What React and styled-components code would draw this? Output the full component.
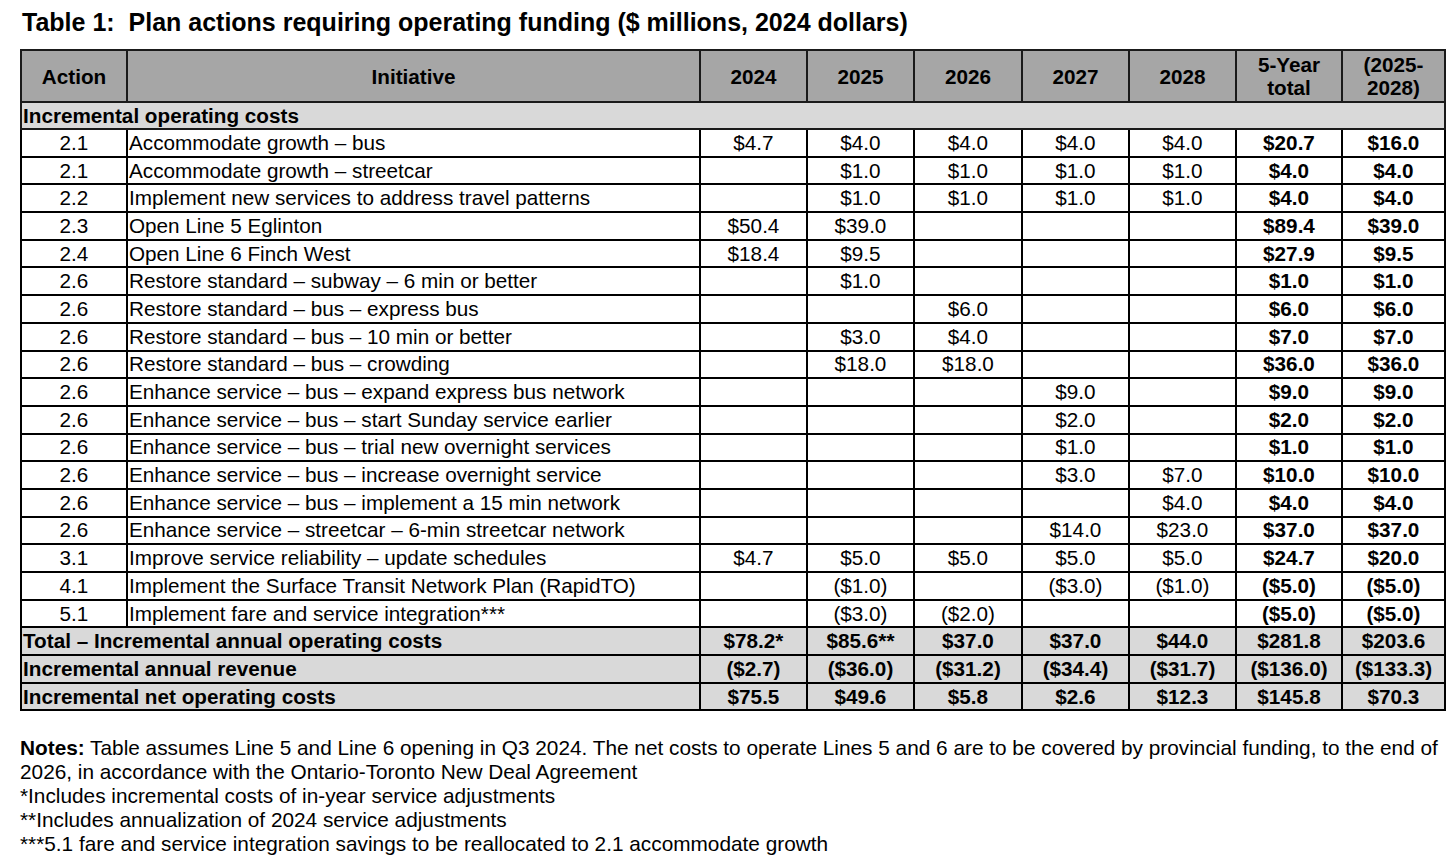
import React from 'react';
import styled, { createGlobalStyle } from 'styled-components';

const GlobalStyle = createGlobalStyle`
  body {
    margin: 0;
    background: #fff;
    color: #000;
    font-family: 'Liberation Sans', Arial, sans-serif;
  }
`;

const StyledPage = styled.div`
  padding: 8px 0 0 20px;
  width: 1424px;
`;

const Title = styled.h1`
  margin: 0 0 13px 2px;
  font-size: 25px;
  line-height: 28px;
  font-weight: 700;
  white-space: pre;
`;

const Table = styled.table`
  width: 1424px;
  table-layout: fixed;
  border-collapse: collapse;
  border: 2px solid #3a3a3a;
  font-size: 20.7px;
`;

const HeadRow = styled.tr`
  height: 52px;
`;

const HeadCell = styled.th`
  padding: 0 2px;
  background: #a6a6a6;
  border: 2px solid #1a1a1a;
  font-weight: 700;
  line-height: 23px;
  text-align: center;
  vertical-align: middle;
`;

const SectionRow = styled.tr`
  height: 27px;
`;

const SectionCell = styled.td`
  padding: 0 1px;
  background: #d9d9d9;
  border: 2px solid #1a1a1a;
  font-weight: 700;
  line-height: 22px;
  text-align: left;
`;

const Row = styled.tr`
  height: 27.7px;
  background: ${({ $shaded }) => ($shaded ? '#d9d9d9' : '#fff')};
`;

const Cell = styled.td`
  padding: 0 1px;
  border: 2px solid #000;
  line-height: 22px;
  text-align: ${({ $align }) => $align || 'center'};
  font-weight: ${({ $bold }) => ($bold ? 700 : 400)};
  white-space: nowrap;
  overflow: hidden;
`;

const Notes = styled.div`
  margin-top: 25px;
  font-size: 20.8px;
  line-height: 24px;

  strong {
    font-weight: 700;
  }
`;

const NoteLine = styled.div`
  white-space: nowrap;
`;

const columns = ['Action', 'Initiative', '2024', '2025', '2026', '2027', '2028'];
const widths = [106, 573, 107, 107, 108, 107, 107, 106, 103];

const rows = [
  ['2.1', 'Accommodate growth – bus', '$4.7', '$4.0', '$4.0', '$4.0', '$4.0', '$20.7', '$16.0'],
  ['2.1', 'Accommodate growth – streetcar', '', '$1.0', '$1.0', '$1.0', '$1.0', '$4.0', '$4.0'],
  ['2.2', 'Implement new services to address travel patterns', '', '$1.0', '$1.0', '$1.0', '$1.0', '$4.0', '$4.0'],
  ['2.3', 'Open Line 5 Eglinton', '$50.4', '$39.0', '', '', '', '$89.4', '$39.0'],
  ['2.4', 'Open Line 6 Finch West', '$18.4', '$9.5', '', '', '', '$27.9', '$9.5'],
  ['2.6', 'Restore standard – subway – 6 min or better', '', '$1.0', '', '', '', '$1.0', '$1.0'],
  ['2.6', 'Restore standard – bus – express bus', '', '', '$6.0', '', '', '$6.0', '$6.0'],
  ['2.6', 'Restore standard – bus – 10 min or better', '', '$3.0', '$4.0', '', '', '$7.0', '$7.0'],
  ['2.6', 'Restore standard – bus – crowding', '', '$18.0', '$18.0', '', '', '$36.0', '$36.0'],
  ['2.6', 'Enhance service – bus – expand express bus network', '', '', '', '$9.0', '', '$9.0', '$9.0'],
  ['2.6', 'Enhance service – bus – start Sunday service earlier', '', '', '', '$2.0', '', '$2.0', '$2.0'],
  ['2.6', 'Enhance service – bus – trial new overnight services', '', '', '', '$1.0', '', '$1.0', '$1.0'],
  ['2.6', 'Enhance service – bus – increase overnight service', '', '', '', '$3.0', '$7.0', '$10.0', '$10.0'],
  ['2.6', 'Enhance service – bus – implement a 15 min network', '', '', '', '', '$4.0', '$4.0', '$4.0'],
  ['2.6', 'Enhance service – streetcar – 6-min streetcar network', '', '', '', '$14.0', '$23.0', '$37.0', '$37.0'],
  ['3.1', 'Improve service reliability – update schedules', '$4.7', '$5.0', '$5.0', '$5.0', '$5.0', '$24.7', '$20.0'],
  ['4.1', 'Implement the Surface Transit Network Plan (RapidTO)', '', '($1.0)', '', '($3.0)', '($1.0)', '($5.0)', '($5.0)'],
  ['5.1', 'Implement fare and service integration***', '', '($3.0)', '($2.0)', '', '', '($5.0)', '($5.0)'],
];

const totals = [
  ['Total – Incremental annual operating costs', '$78.2*', '$85.6**', '$37.0', '$37.0', '$44.0', '$281.8', '$203.6'],
  ['Incremental annual revenue', '($2.7)', '($36.0)', '($31.2)', '($34.4)', '($31.7)', '($136.0)', '($133.3)'],
  ['Incremental net operating costs', '$75.5', '$49.6', '$5.8', '$2.6', '$12.3', '$145.8', '$70.3'],
];

const App = () => (
  <>
    <GlobalStyle />
    <StyledPage>
      <Title>{'Table 1:  Plan actions requiring operating funding ($ millions, 2024 dollars)'}</Title>

      <Table>
        <colgroup>
          {widths.map((w, i) => (
            <col key={i} style={{ width: w }} />
          ))}
        </colgroup>
        <thead>
          <HeadRow>
            {columns.map(c => (
              <HeadCell key={c}>{c}</HeadCell>
            ))}
            <HeadCell>
              5-Year
              <br />
              total
            </HeadCell>
            <HeadCell>
              (2025-
              <br />
              2028)
            </HeadCell>
          </HeadRow>
        </thead>
        <tbody>
          <SectionRow>
            <SectionCell colSpan={9}>Incremental operating costs</SectionCell>
          </SectionRow>
          {rows.map((r, i) => (
            <Row key={i}>
              <Cell>{r[0]}</Cell>
              <Cell $align="left">{r[1]}</Cell>
              {r.slice(2).map((v, j) => (
                <Cell key={j} $bold={j >= 5}>
                  {v}
                </Cell>
              ))}
            </Row>
          ))}
          {totals.map((r, i) => (
            <Row key={i} $shaded>
              <Cell colSpan={2} $align="left" $bold>
                {r[0]}
              </Cell>
              {r.slice(1).map((v, j) => (
                <Cell key={j} $bold>
                  {v}
                </Cell>
              ))}
            </Row>
          ))}
        </tbody>
      </Table>

      <Notes>
        <NoteLine>
          <strong>Notes:</strong> Table assumes Line 5 and Line 6 opening in Q3 2024. The net costs to operate Lines 5
          and 6 are to be covered by provincial funding, to the end of
        </NoteLine>
        <NoteLine>2026, in accordance with the Ontario-Toronto New Deal Agreement</NoteLine>
        <NoteLine>*Includes incremental costs of in-year service adjustments</NoteLine>
        <NoteLine>**Includes annualization of 2024 service adjustments</NoteLine>
        <NoteLine>***5.1 fare and service integration savings to be reallocated to 2.1 accommodate growth</NoteLine>
      </Notes>
    </StyledPage>
  </>
);

export default App;
